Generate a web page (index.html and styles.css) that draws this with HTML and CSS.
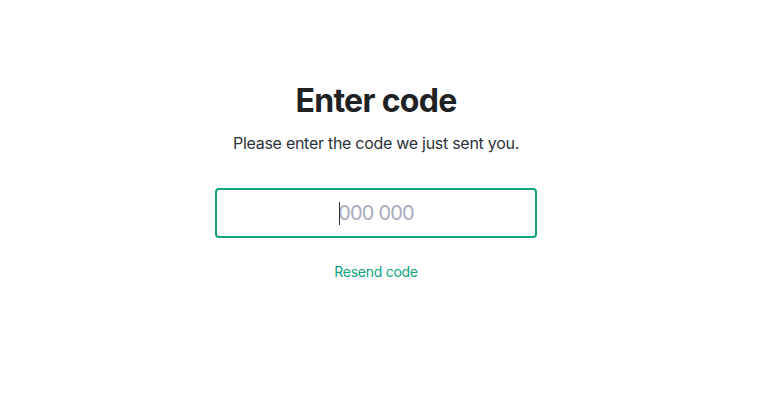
FILE: index.html
```html
<!DOCTYPE html>
<html lang="en">
<head>
<meta charset="utf-8">
<title>Enter code</title>
<link rel="stylesheet" href="styles.css">
</head>
<body>
<main class="page">
  <section class="card">
    <h1 class="title">Enter code</h1>
    <p class="subtitle">Please enter the code we just sent you.</p>
    <div class="field">
      <input class="code-input" type="text" placeholder="000 000" autofocus>
    </div>
    <a class="resend" href="#">Resend code</a>
  </section>
</main>
</body>
</html>
```

FILE: styles.css
```css
html, body {
  margin: 0;
  padding: 0;
  background: #ffffff;
}
body {
  font-family: Inter, "Noto Sans", sans-serif;
  color: #2d333a;
}
.page {
  display: flex;
  justify-content: center;
  padding-top: 81px;
  padding-right: 5px;
}
.card {
  width: 322px;
  display: flex;
  flex-direction: column;
  align-items: center;
}
.title {
  margin: 0;
  font-size: 32px;
  line-height: 40px;
  font-weight: 700;
  color: #202123;
  letter-spacing: -0.7px;
}
.subtitle {
  margin: 10px 0 0;
  font-size: 16px;
  line-height: 24px;
  color: #2d333a;
  letter-spacing: -0.28px;
}
.field {
  position: relative;
  margin-top: 33px;
  width: 322px;
}
.field::after {
  content: "";
  position: absolute;
  left: 124px;
  top: 14px;
  width: 1px;
  height: 23px;
  background: #2d333a;
}
.code-input {
  display: block;
  box-sizing: border-box;
  width: 322px;
  height: 50px;
  border: 2px solid #10a37f;
  border-radius: 4px;
  outline: none;
  font-family: Inter, "Noto Sans", sans-serif;
  font-size: 20px;
  letter-spacing: -0.8px;
  text-align: center;
  color: #2d333a;
  caret-color: transparent;
  padding: 0 12px;
}
.code-input::placeholder {
  color: #a9aabd;
}
.resend {
  margin-top: 24px;
  font-size: 14px;
  line-height: 20px;
  color: #10a37f;
  text-decoration: none;
  letter-spacing: -0.27px;
}
```
